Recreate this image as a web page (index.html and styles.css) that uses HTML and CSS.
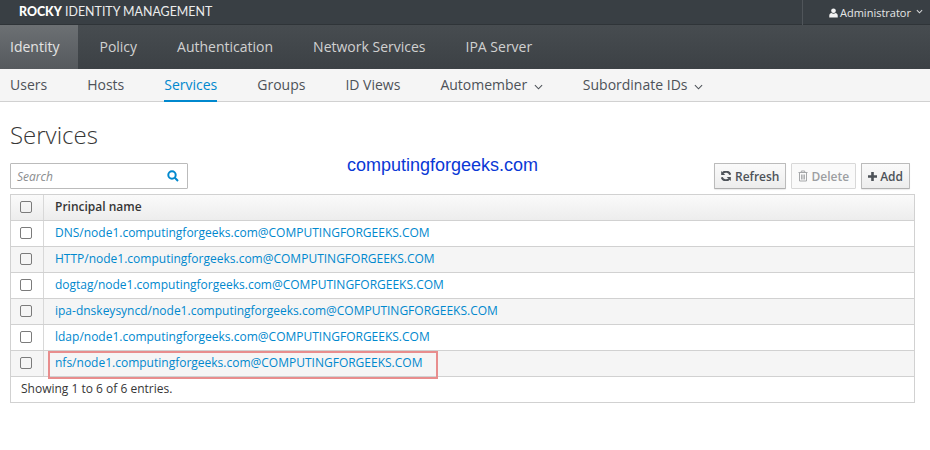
FILE: index.html
```html
<!DOCTYPE html>
<html lang="en">
<head>
<meta charset="utf-8">
<title>Services</title>
<link rel="stylesheet" href="styles.css">
</head>
<body>
<header class="topbar">
  <div class="brand"><b>ROCKY</b> IDENTITY MANAGEMENT</div>
  <div class="user">
    <svg class="user-icon" viewBox="0 0 10 11"><circle cx="5" cy="3" r="2.6"/><path d="M0.3 10.6V8.2C0.3 6.6 1.6 5.8 2.8 5.6 3.4 6.1 4.1 6.3 5 6.3 5.9 6.3 6.6 6.1 7.2 5.6 8.4 5.8 9.7 6.6 9.7 8.2V10.6Z"/></svg>
    <span>Administrator</span>
    <svg class="caret-small" viewBox="0 0 8 5"><path d="M1 1l3 3 3-3"/></svg>
  </div>
</header>
<nav class="mainnav">
  <a class="main-item active">Identity</a>
  <a class="main-item">Policy</a>
  <a class="main-item">Authentication</a>
  <a class="main-item">Network Services</a>
  <a class="main-item">IPA Server</a>
</nav>
<nav class="subnav">
  <a class="sub-item">Users</a>
  <a class="sub-item">Hosts</a>
  <a class="sub-item current">Services</a>
  <a class="sub-item">Groups</a>
  <a class="sub-item">ID Views</a>
  <a class="sub-item">Automember <svg class="caret" viewBox="0 0 10 6"><path d="M1 1l4 4 4-4"/></svg></a>
  <a class="sub-item">Subordinate IDs <svg class="caret" viewBox="0 0 10 6"><path d="M1 1l4 4 4-4"/></svg></a>
</nav>
<main class="content">
  <h1>Services</h1>
  <div class="toolbar">
    <div class="search">
      <span class="placeholder">Search</span>
      <svg class="search-icon" viewBox="0 0 12 12"><circle cx="5" cy="5" r="3.7"/><path d="M7.8 7.8l3.2 3.2"/></svg>
    </div>
    <div class="watermark">computingforgeeks.com</div>
    <div class="actions">
      <button class="btn"><svg class="btn-icon icon-refresh" viewBox="0.8 0.8 10.400 10.400"><path class="sync" d="M10.400 4.600A4.600 4.600 0 0 0 2.600 3"/><path class="sync" d="M1.600 7.400A4.600 4.600 0 0 0 9.400 9"/><path d="M1 0.800V5H5.200Z"/><path d="M11 11.200V7H6.800Z"/></svg>Refresh</button>
      <button class="btn disabled"><svg class="btn-icon trash" viewBox="0 0 10 12"><path d="M0.500 2.500h9M3.300 2.300V1h3.400v1.300M1.500 3v8h7V3M3.600 4.500v5M5 4.500v5M6.400 4.500v5"/></svg>Delete</button>
      <button class="btn"><svg class="btn-icon" viewBox="0.500 0.500 9 9"><path d="M3.700 0.500h2.600v3.200h3.200v2.600H6.300v3.200H3.700V6.300H0.500V3.700h3.200Z"/></svg>Add</button>
    </div>
  </div>
  <div class="table">
    <div class="row head">
      <div class="check"><span class="box"></span></div>
      <div class="cell">Principal name</div>
    </div>
    <div class="row">
      <div class="check"><span class="box"></span></div>
      <div class="cell"><a>DNS/node1.computingforgeeks.com@COMPUTINGFORGEEKS.COM</a></div>
    </div>
    <div class="row odd">
      <div class="check"><span class="box"></span></div>
      <div class="cell"><a>HTTP/node1.computingforgeeks.com@COMPUTINGFORGEEKS.COM</a></div>
    </div>
    <div class="row">
      <div class="check"><span class="box"></span></div>
      <div class="cell"><a>dogtag/node1.computingforgeeks.com@COMPUTINGFORGEEKS.COM</a></div>
    </div>
    <div class="row odd">
      <div class="check"><span class="box"></span></div>
      <div class="cell"><a>ipa-dnskeysyncd/node1.computingforgeeks.com@COMPUTINGFORGEEKS.COM</a></div>
    </div>
    <div class="row">
      <div class="check"><span class="box"></span></div>
      <div class="cell"><a>ldap/node1.computingforgeeks.com@COMPUTINGFORGEEKS.COM</a></div>
    </div>
    <div class="row odd marked">
      <div class="check"><span class="box"></span></div>
      <div class="cell"><a>nfs/node1.computingforgeeks.com@COMPUTINGFORGEEKS.COM</a></div>
      <span class="highlight"></span>
    </div>
    <div class="foot">Showing 1 to 6 of 6 entries.</div>
  </div>
</main>
</body>
</html>
```
FILE: styles.css
```css
* { box-sizing: border-box; }
html, body { margin: 0; padding: 0; }
body {
  width: 930px;
  height: 450px;
  overflow: hidden;
  background: #fff;
  font-family: "Open Sans", "Noto Sans", sans-serif;
  color: #363636;
}
.topbar {
  height: 25px;
  background: #393f44;
  border-bottom: 1px solid #2f3438;
  display: flex;
  justify-content: space-between;
  align-items: stretch;
}
.brand {
  margin-left: 19px;
  font-family: "Lato", sans-serif;
  font-size: 12.4px;
  line-height: 24px;
  color: #eceded;
}
.brand b { font-weight: 900; color: #fff; }
.user {
  width: 128px;
  border-left: 1px solid #50555a;
  display: flex;
  align-items: center;
  padding-left: 26px;
  font-size: 11px;
  color: #e6e7e8;
  height: 25px;
}
.user-icon { width: 9px; height: 10px; fill: #f3f3f3; margin-right: 2px; }
.caret-small { width: 7px; height: 5px; margin-left: 5px; margin-top: -3px; fill: none; stroke: #d5d6d7; stroke-width: 1.2; }
.mainnav {
  height: 44px;
  display: flex;
  background: linear-gradient(#474c50, #3c4145);
  font-size: 14px;
}
.main-item {
  padding: 0 20px;
  line-height: 44px;
  color: #d1d1d1;
}
.main-item.active {
  padding: 0 19px 0 10px;
  margin-right: 1px;
  color: #e4e4e4;
  background: linear-gradient(#6c7073, #55595d);
}
.subnav {
  height: 33px;
  background: #f5f5f5;
  border-bottom: 1px solid #d1d1d1;
  display: flex;
  gap: 40px;
  padding-left: 10px;
  font-size: 14px;
  color: #4d5258;
}
.sub-item { line-height: 32px; height: 33px; white-space: nowrap; }
.sub-item.current { color: #0088ce; border-bottom: 2px solid #0088ce; }
.caret { width: 9px; height: 6px; margin-left: 3px; fill: none; stroke: #4d5258; stroke-width: 1.2; }
.content { padding: 0 15px 0 10px; }
h1 {
  margin: 0;
  padding-top: 16px;
  font-size: 24px;
  font-weight: 300;
  line-height: 33px;
  height: 60px;
  color: #363636;
}
.toolbar {
  height: 32px;
  display: flex;
  align-items: flex-start;
  position: relative;
}
.search {
  width: 178px;
  height: 26px;
  margin-top: 1px;
  border: 1px solid #bbb;
  border-radius: 1px;
  display: flex;
  align-items: center;
  justify-content: space-between;
  padding: 0 8px 0 6px;
  font-size: 12px;
}
.placeholder { font-style: italic; color: #8b8d8f; }
.search-icon { width: 12px; height: 12px; fill: none; stroke: #0088ce; stroke-width: 2; }
.watermark {
  position: absolute;
  left: 337px;
  top: -7px;
  font-family: "Liberation Sans", Arial, sans-serif;
  font-size: 18px;
  line-height: 21px;
  color: #0a38d6;
}
.actions {
  margin-left: auto;
  margin-right: 5px;
  margin-top: 1px;
  display: flex;
  gap: 5px;
}
.btn {
  height: 26px;
  padding: 0 6px;
  font: 600 12px "Open Sans", sans-serif;
  color: #4d5258;
  background: linear-gradient(#fafafa, #ededed);
  border: 1px solid #bbb;
  border-bottom-color: #b0b0b0;
  border-radius: 1px;
  display: flex;
  align-items: center;
  box-shadow: 0 1px 1px rgba(0,0,0,0.08);
}
.btn.disabled {
  color: #9c9ea1;
  background: #fafafa;
  border-color: #d8d8d8;
  box-shadow: none;
}
.btn-icon { width: 9px; height: 9px; margin-right: 3px; fill: #4d5258; }
.btn-icon.icon-refresh { width: 10px; height: 10px; margin-right: 4px; }
.sync { fill: none; stroke: #4d5258; stroke-width: 2.2; }
.btn-icon.trash { fill: none; stroke: #a5a7a9; stroke-width: 1; height: 12px; width: 10px; margin-right: 3px; }
.table {
  width: 905px;
  border: 1px solid #d1d1d1;
  font-size: 12px;
}
.row {
  display: flex;
  height: 26px;
  border-bottom: 1px solid #d1d1d1;
  position: relative;
}
.row.odd { background: #f5f5f5; }
.row.head { background: linear-gradient(#fafafa, #ededed); font-weight: 600; color: #363636; }
.check {
  width: 33px;
  padding-right: 2px;
  border-right: 1px solid #d8d8d8;
  display: flex;
  align-items: center;
  justify-content: center;
}
.box {
  width: 12px;
  height: 12px;
  border: 1px solid #7b7b7b;
  border-radius: 2px;
  background: #fff;
  margin-top: -2px;
}
.row.odd .box { background: #f5f5f5; }
.head .box { background: transparent; }
.cell { padding-left: 11px; line-height: 24px; white-space: nowrap; }
.cell a { color: #0088ce; }
.highlight {
  position: absolute;
  left: 37px;
  top: 0;
  width: 390px;
  height: 28px;
  border: 2px solid #e88d8d;
  pointer-events: none;
}
.foot { height: 25px; line-height: 24px; padding-left: 10px; color: #363636; }
```
